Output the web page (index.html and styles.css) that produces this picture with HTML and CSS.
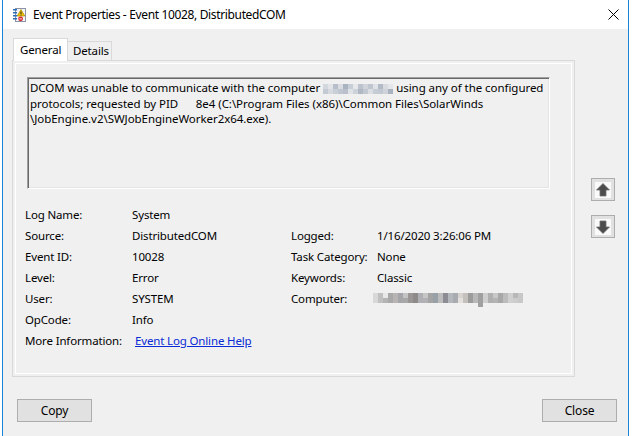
FILE: index.html
```html
<!DOCTYPE html>
<html lang="en">
<head>
    <meta charset="UTF-8">
    <title>Event Properties - Event 10028, DistributedCOM</title>
    <link rel="stylesheet" href="styles.css">
</head>
<body>

    <div class="window">
        <!-- Title bar -->
        <div class="titlebar">
            <svg class="app-icon" width="16" height="16" viewBox="0 0 16 16">
                <rect x="3.5" y="1.5" width="10" height="13" fill="#f6f6f6" stroke="#8a94a6"/>
                <rect x="1" y="2" width="4" height="1.5" fill="#2f6db8"/>
                <rect x="1" y="5" width="4" height="1.5" fill="#2f6db8"/>
                <rect x="1" y="8" width="4" height="1.5" fill="#2f6db8"/>
                <rect x="1" y="11" width="4" height="1.5" fill="#2f6db8"/>
                <polygon points="9,2.5 12.8,9 5.2,9" fill="#f7c600" stroke="#a88600" stroke-width="0.7"/>
                <rect x="8.5" y="4.5" width="1" height="2.6" fill="#222"/>
                <rect x="8.5" y="7.6" width="1" height="0.9" fill="#222"/>
                <circle cx="8.6" cy="11.8" r="2.4" fill="#d8262c"/>
                <rect x="7.3" y="11.4" width="2.6" height="0.9" fill="#fff"/>
            </svg>
            <span class="title">Event Properties - Event 10028, DistributedCOM</span>
            <svg class="close-x" width="11" height="11" viewBox="0 0 11 11">
                <path d="M0.5 0.5 L10.5 10.5 M10.5 0.5 L0.5 10.5" stroke="#000" stroke-width="1"/>
            </svg>
        </div>

        <div class="content">
            <div class="main">
                <div class="tabbox">
                    <div class="tabs">
                        <div class="tab active">General</div>
                        <div class="tab">Details</div>
                    </div>
                    <div class="panel">
<div class="description">DCOM was unable to communicate with the computer <svg class="blur" width="70" height="10" viewBox="0 0 70 10"><rect x="0" y="0" width="5" height="5" fill="#d3d8df"/><rect x="0" y="5" width="5" height="5" fill="#c4cad3"/><rect x="5" y="0" width="5" height="5" fill="#e2e4e8"/><rect x="5" y="5" width="5" height="5" fill="#d6dae0"/><rect x="10" y="0" width="5" height="5" fill="#b7bfca"/><rect x="10" y="5" width="5" height="5" fill="#c9cfd7"/><rect x="15" y="0" width="5" height="5" fill="#d9dce1"/><rect x="15" y="5" width="5" height="5" fill="#bfc6d0"/><rect x="20" y="0" width="5" height="5" fill="#aab3c0"/><rect x="20" y="5" width="5" height="5" fill="#b9c0cb"/><rect x="25" y="0" width="5" height="5" fill="#c8ced6"/><rect x="25" y="5" width="5" height="5" fill="#dfe2e6"/><rect x="30" y="0" width="5" height="5" fill="#e7e8eb"/><rect x="30" y="5" width="5" height="5" fill="#cdd2d9"/><rect x="35" y="0" width="5" height="5" fill="#bcc3cd"/><rect x="35" y="5" width="5" height="5" fill="#b0b8c4"/><rect x="40" y="0" width="5" height="5" fill="#d0d4da"/><rect x="40" y="5" width="5" height="5" fill="#c2c8d1"/><rect x="45" y="0" width="5" height="5" fill="#c0c6cf"/><rect x="45" y="5" width="5" height="5" fill="#dadde2"/><rect x="50" y="0" width="5" height="5" fill="#dfe2e6"/><rect x="50" y="5" width="5" height="5" fill="#c6ccd4"/><rect x="55" y="0" width="5" height="5" fill="#b2bac6"/><rect x="55" y="5" width="5" height="5" fill="#c3c9d2"/><rect x="60" y="0" width="5" height="5" fill="#d8dbe0"/><rect x="60" y="5" width="5" height="5" fill="#cfd3d9"/><rect x="65" y="0" width="5" height="5" fill="#e4e6e9"/><rect x="65" y="5" width="5" height="5" fill="#a9b2bf"/></svg> using any of the configured
protocols; requested by PID      8e4 (C:\Program Files (x86)\Common Files\SolarWinds
\JobEngine.v2\SWJobEngineWorker2x64.exe).</div>

                        <div class="fields">
                            <span>Log Name:</span><span>System</span><span></span><span></span>
                            <span>Source:</span><span>DistributedCOM</span><span>Logged:</span><span>1/16/2020 3:26:06 PM</span>
                            <span>Event ID:</span><span>10028</span><span>Task Category:</span><span>None</span>
                            <span>Level:</span><span>Error</span><span>Keywords:</span><span>Classic</span>
                            <span>User:</span><span>SYSTEM</span><span>Computer:</span>
                            <span>
                                <svg class="blur" width="150" height="14" viewBox="0 0 150 14">
                                    <rect x="0" y="0" width="5" height="10" fill="#d8d8d8"/>
                                    <rect x="5" y="0" width="5" height="10" fill="#c0c0c0"/>
                                    <rect x="10" y="0" width="5" height="10" fill="#e8e8e8"/>
                                    <rect x="15" y="0" width="5" height="10" fill="#a8a8a8"/>
                                    <rect x="20" y="0" width="5" height="10" fill="#b8b4b4"/>
                                    <rect x="25" y="0" width="5" height="10" fill="#a6a6aa"/>
                                    <rect x="30" y="0" width="5" height="10" fill="#c4c4c4"/>
                                    <rect x="35" y="0" width="5" height="10" fill="#9a9696"/>
                                    <rect x="40" y="0" width="5" height="10" fill="#8e8a8a"/>
                                    <rect x="45" y="0" width="5" height="10" fill="#b0b0b4"/>
                                    <rect x="50" y="0" width="5" height="10" fill="#c6c6c6"/>
                                    <rect x="55" y="0" width="5" height="10" fill="#a4a4a4"/>
                                    <rect x="60" y="0" width="5" height="10" fill="#98a0a8"/>
                                    <rect x="65" y="0" width="5" height="10" fill="#bcbcbc"/>
                                    <rect x="70" y="0" width="5" height="10" fill="#8c8c94"/>
                                    <rect x="75" y="0" width="5" height="10" fill="#b4b8bc"/>
                                    <rect x="80" y="0" width="5" height="10" fill="#a8acb0"/>
                                    <rect x="85" y="0" width="5" height="10" fill="#d6d2d0"/>
                                    <rect x="90" y="0" width="5" height="10" fill="#c4c0bc"/>
                                    <rect x="95" y="0" width="5" height="10" fill="#9c9c9c"/>
                                    <rect x="100" y="0" width="5" height="10" fill="#b8b8b8"/>
                                    <rect x="105" y="0" width="5" height="14" fill="#a0a0a0"/>
                                    <rect x="110" y="0" width="5" height="10" fill="#cfcfcf"/>
                                    <rect x="115" y="0" width="5" height="10" fill="#b0b0b0"/>
                                    <rect x="120" y="0" width="5" height="10" fill="#c8c8c8"/>
                                    <rect x="125" y="0" width="5" height="10" fill="#a8a8a8"/>
                                    <rect x="130" y="0" width="5" height="10" fill="#bcbcbc"/>
                                    <rect x="135" y="0" width="5" height="10" fill="#d0d0d0"/>
                                    <rect x="140" y="0" width="5" height="10" fill="#b8b8b8"/>
                                    <rect x="145" y="0" width="5" height="10" fill="#c8c8c8"/>
                                    <rect x="10" y="5" width="5" height="5" fill="#b4b4b4"/>
                                    <rect x="30" y="5" width="5" height="5" fill="#a8a8a8"/>
                                    <rect x="50" y="5" width="5" height="5" fill="#b2b2b6"/>
                                    <rect x="85" y="5" width="5" height="5" fill="#e4e0de"/>
                                    <rect x="120" y="5" width="5" height="5" fill="#b4b4b4"/>
                                    <rect x="140" y="5" width="5" height="5" fill="#cccccc"/>
                                </svg>
                            </span>
                            <span>OpCode:</span><span>Info</span><span></span><span></span>
                            <span>More Information:</span><a class="link" href="#">Event Log Online Help</a><span></span><span></span>
                        </div>
                    </div>
                </div>

                <!-- Previous / next event -->
                <div class="nav">
                    <button class="nav-btn">
                        <svg width="16" height="16" viewBox="0 0 16 16">
                            <rect width="16" height="16" fill="#fafafa"/>
                            <polygon points="8,1.5 14.5,8 11,8 11,14 5,14 5,8 1.5,8" fill="#4c4c4c" stroke="#6e6e6e" stroke-width="0.8"/>
                        </svg>
                    </button>
                    <button class="nav-btn">
                        <svg width="16" height="16" viewBox="0 0 16 16">
                            <rect width="16" height="16" fill="#fafafa"/>
                            <polygon points="8,14.5 14.5,8 11,8 11,2 5,2 5,8 1.5,8" fill="#4c4c4c" stroke="#6e6e6e" stroke-width="0.8"/>
                        </svg>
                    </button>
                </div>
            </div>

            <div class="buttons">
                <button class="btn">Copy</button>
                <button class="btn">Close</button>
            </div>
        </div>
    </div>

</body>
</html>
```

FILE: styles.css
```css
* {
    margin: 0;
    padding: 0;
    box-sizing: border-box;
}

body {
    font-family: "Noto Sans", sans-serif;
    font-size: 11.5px;
    letter-spacing: -0.15px;
    color: #000;
    background-color: #fff;
    width: 634px;
    height: 436px;
    overflow: hidden;
}

.window {
    margin-left: 2px;
    width: 627px;
    height: 436px;
    border-left: 1px solid #1883d7;
    border-right: 1px solid #1883d7;
    background-color: #f0f0f0;
    display: flex;
    flex-direction: column;
}

/* Title bar */
.titlebar {
    height: 29px;
    background-color: #fff;
    display: flex;
    align-items: center;
    padding-left: 9px;
}

.app-icon {
    margin-right: 5px;
}

.title {
    flex: 1;
    font-size: 12px;
    letter-spacing: -0.35px;
    line-height: 16px;
}

.close-x {
    margin-right: 9px;
}

/* Dialog body */
.content {
    flex: 1;
    display: flex;
    flex-direction: column;
    padding: 9px 11px 0 9px;
}

.main {
    display: flex;
}

.tabbox {
    width: 563px;
}

.tabs {
    display: flex;
    align-items: flex-end;
    height: 23px;
    margin-bottom: -1px;
    padding-left: 1px;
    position: relative;
    z-index: 1;
}

.tab {
    width: 44px;
    height: 19px;
    margin-bottom: 1px;
    padding-left: 5px;
    line-height: 18px;
    border: 1px solid #d9d9d9;
    border-bottom: none;
    background-color: #f0f0f0;
}

.tab.active {
    width: 55px;
    height: 23px;
    margin-bottom: 0;
    padding: 1px 0 0 6px;
    line-height: 20px;
    background-color: #fff;
}

.tab + .tab {
    border-left: none;
}

.panel {
    height: 317px;
    padding-top: 16px;
    border: 1px solid #d9d9d9;
    box-shadow: inset 0 0 0 2px #f0f0f0, inset 0 0 0 3px #fff;
}

.description {
    width: 523px;
    height: 112px;
    margin-left: 14px;
    padding: 2px 2px;
    line-height: 15.5px;
    letter-spacing: -0.05px;
    white-space: pre;
    overflow: hidden;
    border: 1px solid;
    border-color: #a0a0a0 #fff #fff #a0a0a0;
    box-shadow: inset 1px 1px 0 #696969, inset -1px -1px 0 #e3e3e3;
}

.description .blur {
    vertical-align: -2px;
}

.fields {
    display: grid;
    grid-template-columns: 107px 159px 86px 1fr;
    grid-auto-rows: 21px;
    align-items: center;
    margin: 15px 0 0 12px;
}

.fields span {
    white-space: nowrap;
}

.fields .blur {
    display: block;
    margin: 3px 0 0 -4px;
}

.link {
    margin-left: 3px;
    color: #0a2bd6;
    text-decoration: underline;
    white-space: nowrap;
}

/* Prev / next arrows */
.nav {
    display: flex;
    flex-direction: column;
    gap: 14px;
    margin-left: 16px;
    padding-top: 140px;
}

.nav-btn {
    width: 24px;
    height: 23px;
    border: 1px solid #adadad;
    background-color: #e1e1e1;
    display: flex;
    align-items: center;
    justify-content: center;
}

/* Bottom buttons */
.buttons {
    display: flex;
    justify-content: space-between;
    margin-top: 22px;
    padding-left: 5px;
}

.btn {
    width: 75px;
    height: 23px;
    font-family: inherit;
    font-size: 12px;
    letter-spacing: inherit;
    color: #000;
    border: 1px solid #adadad;
    background-color: #e1e1e1;
}
```
